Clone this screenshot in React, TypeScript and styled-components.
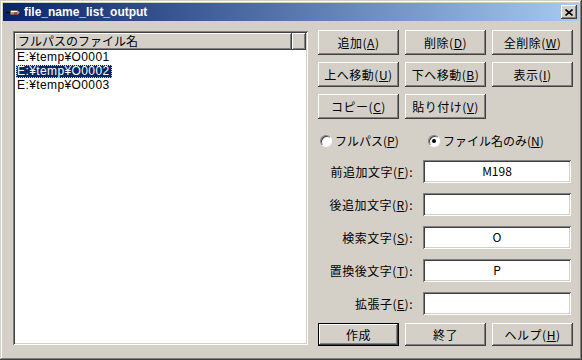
import React from 'react';
import styled, { createGlobalStyle } from 'styled-components';

const face = '#D4D0C8';
const shadow = '#808080';
const dark = '#404040';
const uiFont = `"Noto Sans CJK JP", "Liberation Sans", sans-serif`;

const GlobalStyle = createGlobalStyle`
  html, body {
    margin: 0;
    padding: 0;
    background: ${face};
  }
`;

const Window = styled.div`
  box-sizing: border-box;
  width: 582px;
  height: 360px;
  padding: 3px;
  background: ${face};
  font-family: ${uiFont};
  font-size: 12px;
  color: #000;
  box-shadow: inset -1px -1px ${dark}, inset 1px 1px ${face},
    inset -2px -2px ${shadow}, inset 2px 2px #fff;
`;

const TitleBar = styled.div`
  height: 18px;
  display: flex;
  align-items: center;
  padding: 0 2px 0 2px;
  background: linear-gradient(to right, #0a246a, #a6caf0);
`;

const TitleText = styled.span`
  margin-left: 3px;
  color: #fff;
  font-family: 'Liberation Sans', Arial, sans-serif;
  font-weight: bold;
  font-size: 12px;
  line-height: 18px;
  flex: 1;
`;

const CloseButton = styled.div`
  box-sizing: border-box;
  width: 16px;
  height: 14px;
  display: flex;
  align-items: center;
  justify-content: center;
  background: ${face};
  box-shadow: inset -1px -1px ${dark}, inset 1px 1px #fff,
    inset -2px -2px ${shadow}, inset 2px 2px ${face};
`;

const Body = styled.div`
  display: flex;
  gap: 10px;
  padding: 9px 0 0 10px;
`;

const ListBox = styled.div`
  box-sizing: border-box;
  margin-top: 1px;
  width: 295px;
  height: 314px;
  padding: 2px;
  background: #fff;
  box-shadow: inset 1px 1px ${shadow}, inset -1px -1px #fff,
    inset 2px 2px ${dark}, inset -2px -2px ${face};
`;

const HeaderRow = styled.div`
  display: flex;
  height: 17px;
`;

const HeaderCell = styled.div<{ $w?: number }>`
  box-sizing: border-box;
  ${(p) => (p.$w ? `width: ${p.$w}px;` : 'flex: 1;')}
  height: 17px;
  padding-left: 3px;
  line-height: 16px;
  background: ${face};
  white-space: nowrap;
  box-shadow: inset -1px -1px ${dark}, inset 1px 1px #fff,
    inset -2px -2px ${shadow};
`;

const Row = styled.div`
  height: 14px;
  line-height: 14px;
  padding-left: 1px;
  font-family: 'Liberation Sans', Arial, sans-serif;
  letter-spacing: 0.4px;
`;

const RowLabel = styled.span<{ $selected?: boolean }>`
  display: inline-block;
  height: 13px;
  line-height: 13px;
  padding: 0 2px 0 1px;
  ${(p) =>
    p.$selected &&
    `
    background: #0a246a;
    color: #fff;
    outline: 1px dotted #d8d890;
    outline-offset: -1px;
  `}
`;

const Side = styled.div`
  width: 255px;
  display: flex;
  flex-direction: column;
`;

const ButtonGrid = styled.div<{ $h: number; $top: number }>`
  display: grid;
  grid-template-columns: repeat(3, 81px);
  grid-auto-rows: ${(p) => p.$h}px;
  gap: 7px 6px;
  margin-top: ${(p) => p.$top}px;
`;

const Button = styled.div<{ $default?: boolean }>`
  box-sizing: border-box;
  display: flex;
  align-items: center;
  justify-content: center;
  background: ${face};
  white-space: nowrap;
  line-height: 14px;
  letter-spacing: 0.5px;
  box-shadow: inset -1px -1px ${dark}, inset 1px 1px #fff,
    inset -2px -2px ${shadow}, inset 2px 2px ${face};
  ${(p) =>
    p.$default &&
    `
    border: 1px solid #000;
  `}
  u {
    text-decoration-thickness: 1px;
    text-underline-offset: 1px;
  }
`;

const RadioRow = styled.div`
  display: flex;
  align-items: center;
  height: 16px;
  margin-top: 14px;
  padding-left: 2px;
`;

const RadioItem = styled.label<{ $w: number }>`
  display: flex;
  align-items: center;
  width: ${(p) => p.$w}px;
  gap: 3px;
  white-space: nowrap;
  line-height: 14px;
`;

const RadioDot = styled.span<{ $on?: boolean }>`
  box-sizing: border-box;
  position: relative;
  flex: none;
  width: 12px;
  height: 12px;
  border-radius: 50%;
  background: #fff;
  border: 1px solid;
  border-color: ${shadow} #fff #fff ${shadow};
  box-shadow: inset 1px 1px ${dark};
  &::after {
    content: '';
    display: ${(p) => (p.$on ? 'block' : 'none')};
    position: absolute;
    left: 3px;
    top: 3px;
    width: 4px;
    height: 4px;
    border-radius: 50%;
    background: #000;
  }
`;

const Fields = styled.div`
  display: flex;
  flex-direction: column;
  gap: 10px;
  margin-top: 11px;
`;

const FieldRow = styled.div`
  display: grid;
  grid-template-columns: 95px 148px;
  gap: 10px;
  height: 23px;
  align-items: center;
`;

const FieldLabel = styled.span`
  text-align: right;
  white-space: nowrap;
  line-height: 14px;
  letter-spacing: 0.5px;
`;

const FieldInput = styled.div`
  box-sizing: border-box;
  height: 23px;
  background: #fff;
  text-align: center;
  line-height: 21px;
  box-shadow: inset 1px 1px ${shadow}, inset -1px -1px #fff,
    inset 2px 2px ${dark}, inset -2px -2px ${face};
`;

const PenIcon = () => (
  <svg width="16" height="16" viewBox="0 0 16 16">
    <line x1="1" y1="8.5" x2="6" y2="8.5" stroke="#000" strokeWidth="1" />
    <polygon points="5,6 13,6 15,8.5 13,11 5,11" fill="#9a9a9a" stroke="#202020" strokeWidth="0.8" />
    <line x1="6" y1="7.5" x2="12" y2="7.5" stroke="#fff" strokeWidth="1" />
    <rect x="9" y="8.5" width="3" height="2" fill="#d02020" />
  </svg>
);

const CloseGlyph = () => (
  <svg width="8" height="7" viewBox="0 0 8 7">
    <path d="M0.5 0.5 L7.5 6.5 M7.5 0.5 L0.5 6.5" stroke="#000" strokeWidth="1.6" />
  </svg>
);

const files = ['E:¥temp¥O0001', 'E:¥temp¥O0002', 'E:¥temp¥O0003'];

const fields = [
  { label: '前追加文字', key: 'F', value: 'M198' },
  { label: '後追加文字', key: 'R', value: '' },
  { label: '検索文字', key: 'S', value: 'O' },
  { label: '置換後文字', key: 'T', value: 'P' },
  { label: '拡張子', key: 'E', value: '' },
];

const Accel = ({ k }: { k: string }) => (
  <>
    (<u>{k}</u>)
  </>
);

export default function App() {
  return (
    <>
      <GlobalStyle />
      <Window>
        <TitleBar>
          <PenIcon />
          <TitleText>file_name_list_output</TitleText>
          <CloseButton>
            <CloseGlyph />
          </CloseButton>
        </TitleBar>
        <Body>
          <ListBox>
            <HeaderRow>
              <HeaderCell $w={277}>フルパスのファイル名</HeaderCell>
              <HeaderCell />
            </HeaderRow>
            {files.map((f, i) => (
              <Row key={f}>
                <RowLabel $selected={i === 1}>{f}</RowLabel>
              </Row>
            ))}
          </ListBox>
          <Side>
            <ButtonGrid $h={25} $top={0}>
              <Button>追加<Accel k="A" /></Button>
              <Button>削除<Accel k="D" /></Button>
              <Button>全削除<Accel k="W" /></Button>
              <Button>上へ移動<Accel k="U" /></Button>
              <Button>下へ移動<Accel k="B" /></Button>
              <Button>表示<Accel k="I" /></Button>
              <Button>コピー<Accel k="C" /></Button>
              <Button>貼り付け<Accel k="V" /></Button>
            </ButtonGrid>
            <RadioRow>
              <RadioItem $w={108}>
                <RadioDot />
                <span>フルパス<Accel k="P" /></span>
              </RadioItem>
              <RadioItem $w={130}>
                <RadioDot $on />
                <span>ファイル名のみ<Accel k="N" /></span>
              </RadioItem>
            </RadioRow>
            <Fields>
              {fields.map((f) => (
                <FieldRow key={f.key}>
                  <FieldLabel>
                    {f.label}
                    <Accel k={f.key} />:
                  </FieldLabel>
                  <FieldInput>{f.value}</FieldInput>
                </FieldRow>
              ))}
            </Fields>
            <ButtonGrid $h={23} $top={8}>
              <Button $default>作成</Button>
              <Button>終了</Button>
              <Button>ヘルプ<Accel k="H" /></Button>
            </ButtonGrid>
          </Side>
        </Body>
      </Window>
    </>
  );
}
